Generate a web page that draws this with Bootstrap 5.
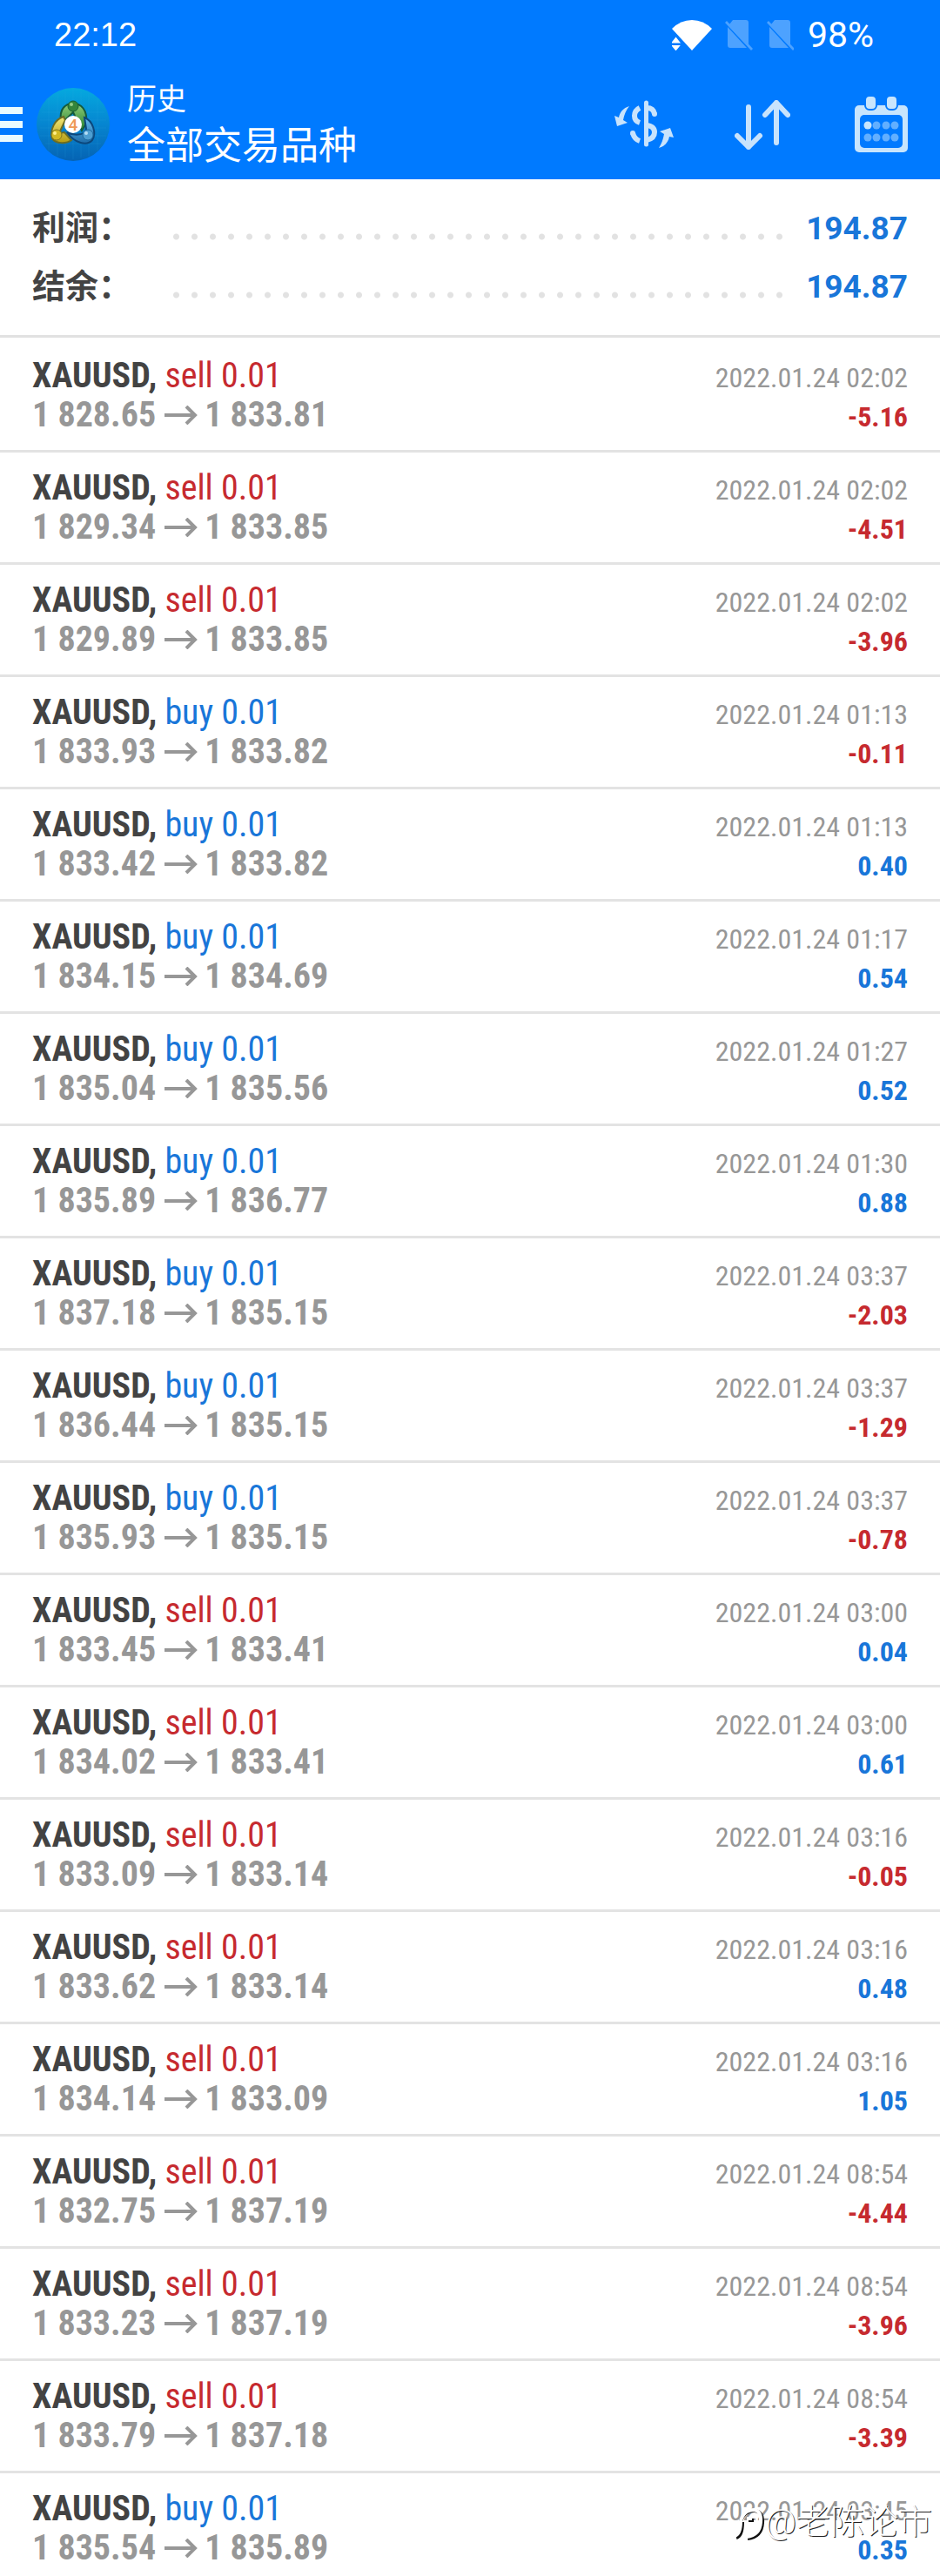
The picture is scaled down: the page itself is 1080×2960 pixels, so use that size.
<!DOCTYPE html>
<html lang="zh-CN">
<head>
<meta charset="utf-8">
<meta name="viewport" content="width=device-width, initial-scale=1">
<title>历史</title>
<link rel="stylesheet" href="https://cdn.jsdelivr.net/npm/bootstrap@5.3.0/dist/css/bootstrap.min.css">
<style>
body{font-family:Roboto,"Noto Sans CJK SC",sans-serif;background:#fff;color:#434343}
.app-head{background:#007aff;color:#fff}
.status-bar{height:80px;padding:0 76px 0 62px;font:38px/80px "Liberation Sans",sans-serif}
.status-bar .pct{font-family:Roboto,sans-serif;font-size:41px}
.tool-row{height:126px;padding-right:36px}
.tool-row button{background:none;border:0;padding:0;display:block}
.logo{margin-left:16px;margin-right:20px}
.sort-btn{margin-left:70px}
.cal-btn{margin-left:74px}
.t-small{font-size:34px;line-height:50px}
.t-big{font-size:44px;line-height:58px}
.totals{padding:23px 37px 22px;border-bottom:3px solid #e1e1e1}
.total-line{font-size:38px;line-height:67px;font-weight:700}
.total-line dd{font-size:37px;color:#1976d9}
.dots{height:8px;margin:18px 20px 0 41px;background:radial-gradient(circle at 50% 50%,#e2e2e2 3px,transparent 4px) 0 0/21px 8px round}
.deals{padding-top:3px}
.deal{padding:18px 37px;border-bottom:3px solid #e3e3e3;font-family:"Roboto Condensed","Liberation Sans Narrow",Roboto,sans-serif;font-size:40px;line-height:45px}
.deal:last-child{border:0;padding-bottom:10px}
.deal .when{font-size:32px;line-height:36px;color:#979797}
.deal .gain{font-size:32px;line-height:36px;font-weight:700}
.prices{color:#979797;font-weight:700}
.sell,.loss{color:#c62a2f}
.buy,.win{color:#1976d9}
.stamp{right:9px;bottom:38px;color:#fff;font-size:39px;font-weight:300;line-height:48px;text-shadow:1px 1px 0 #222}
</style>
<script src="https://cdn.jsdelivr.net/npm/bootstrap@5.3.0/dist/js/bootstrap.bundle.min.js"></script>
</head>
<body class="position-relative">
<header class="app-head">
  <div class="status-bar d-flex align-items-center justify-content-between">
    <span>22:12</span>
    <div class="d-flex align-items-center">
      <svg width="140" height="36" viewBox="0 0 140 36" aria-hidden="true">
        <path fill="#fff" d="M0 11Q10 1 23 1T46 11L23 36ZM"/>
        <path fill="#fff" stroke="#007aff" stroke-width="2" d="M-3 28.500 4.500 19 12 28.500ZM-3 29 4.500 38 12 29Z"/>
        <g fill="#4da2ff"><path id="sim" d="M70 1h15q3 0 3 3v25L66 6ZM64 9 86 33H67q-3 0-3-3ZM61 4l2-2 30 32-2 2Z"/><use href="#sim" x="48"/></g>
      </svg>
      <span class="pct ms-3">98%</span>
    </div>
  </div>
  <div class="tool-row d-flex align-items-center">
    <button type="button" aria-label="菜单"><svg class="d-block" width="26" height="40" fill="#e9fbff"><path d="M0 0h26v8H0zM0 16h26v8H0zM0 32h26v8H0z"/></svg></button>
    <svg class="logo" width="84" height="84" viewBox="0 0 84 84" aria-hidden="true">
      <defs>
        <linearGradient id="sky" x2="0" y2="1"><stop stop-color="#05a9df"/><stop offset=".5" stop-color="#0685d0"/><stop offset="1" stop-color="#0563b3"/></linearGradient>
        <linearGradient id="gr" x2="0" y2="1"><stop stop-color="#8fcc78"/><stop offset="1" stop-color="#24812d"/></linearGradient>
        <linearGradient id="ye" x2="0" y2="1"><stop stop-color="#f2e878"/><stop offset="1" stop-color="#b59b12"/></linearGradient>
        <linearGradient id="bl" x2="0" y2="1"><stop stop-color="#65b8e8"/><stop offset="1" stop-color="#1d6dab"/></linearGradient>
      </defs>
      <circle cx="42" cy="42" r="42" fill="url(#sky)"/>
      <path stroke="#39b8e8" stroke-opacity=".15" d="M14 12v60M24 6v72M33 4v76M42 2v80M51 4v76M60 6v72M70 12v60M6 28h72M4 37h76M4 46h76M4 55h76M10 64h64" fill="none"/>
      <path d="M28 38C26 24 33 18 42 18s17 7 15 23l-5 8L42 28l-8 8Z" fill="url(#gr)" stroke="#155a3c" stroke-width="2"/>
      <path d="M31 33c-10 3-16 15-13 25 4 7 17 6 22 2l-8-9-6 1 7-15Z" fill="url(#ye)" stroke="#6b6d24" stroke-width="2"/>
      <path d="M55 34c10 4 14 18 9 26-6 7-20 4-29-9 8 4 14 4 21 0l1-4Z" fill="url(#bl)" stroke="#0c477c" stroke-width="2"/>
      <circle cx="42" cy="21" r="6" fill="#35853a" stroke="#185e31"/><circle cx="40" cy="19" r="2" fill="#98ce86"/>
      <circle cx="23" cy="54" r="6" fill="#d1b923" stroke="#81761f"/><circle cx="21" cy="52" r="2" fill="#fff18c"/>
      <circle cx="59" cy="54" r="6" fill="#4e9ed1" stroke="#19679e"/><circle cx="57" cy="52" r="2" fill="#b5ddf5"/>
      <circle cx="42" cy="42" r="10" fill="#fff"/>
      <text x="42" y="49" text-anchor="middle" font-family="Roboto,sans-serif" font-size="19" font-weight="500" fill="#ef9a57">4</text>
    </svg>
    <div class="flex-grow-1"><div class="t-small">历史</div><h1 class="t-big fw-normal mb-0">全部交易品种</h1></div>
    <button type="button" aria-label="品种"><svg class="d-block" width="68" height="56" viewBox="0 0 68 56" fill="none" stroke="#c8e3fc" stroke-width="6">
      <path d="M36.500 3v48" stroke-width="5" stroke-linecap="round"/>
      <path d="M29 9Q23 12 23 18T29 26M37 9Q45 9 46 16M37 29Q46 30 46 37T37 46M21 38Q23 45 29 47"/>
      <path d="M46 16v.1M21 38v.1" stroke-linecap="round"/>
      <path d="M17 7C10 9 6 14 5 20L0 18 3 30 15 26 10 23C11 17 13 12 17 7ZM51 55c7-2 11-7 12-13l5 1-4-11-12 4 5 3c-1 6-3 11-6 16Z" fill="#c8e3fc" stroke="none"/></svg></button>
    <button type="button" class="sort-btn" aria-label="排序"><svg class="d-block" width="64" height="57" viewBox="0 0 64 57" fill="none" stroke="#c8e3fc" stroke-width="6" stroke-linecap="round" stroke-linejoin="round"><path d="M16 8v46M3 41l13 13 13-13M48 49V3M35 17 48 3 61 17"/></svg></button>
    <button type="button" class="cal-btn" aria-label="日期"><svg class="d-block" width="62" height="64" viewBox="0 0 62 64">
      <rect y="10" width="61" height="54" rx="5" fill="#c8e5fd"/><rect x="6" y="21" width="49" height="38" rx="5" fill="#007aff"/>
      <g fill="#c8e5fd" stroke="#007aff" stroke-width="2"><rect x="12" y="-1" width="13" height="16" rx="5"/><rect x="36" y="-1" width="13" height="16" rx="5"/></g>
      <g fill="#62afff"><circle cx="15" cy="33" r="4.500" fill="#c8e5fd"/><circle cx="25" cy="33" r="4.500"/><circle cx="36" cy="33" r="4.500"/><circle cx="46" cy="33" r="4.500"/><circle cx="15" cy="47" r="4.500"/><circle cx="25" cy="47" r="4.500"/><circle cx="36" cy="47" r="4.500"/><circle cx="46" cy="47" r="4.500"/></g></svg></button>
  </div>
</header>
<main>
  <dl class="totals mb-0">
    <div class="total-line d-flex align-items-center"><dt>利润：</dt><span class="dots flex-grow-1"></span><dd class="mb-0">194.87</dd></div>
    <div class="total-line d-flex align-items-center"><dt>结余：</dt><span class="dots flex-grow-1"></span><dd class="mb-0">194.87</dd></div>
  </dl>
  <ul class="deals list-unstyled mb-0" id="deals"></ul>
</main>
<div class="stamp position-absolute d-flex align-items-center">
  <svg width="36" height="44" viewBox="0 0 36 44" fill="none" aria-hidden="true"><path d="M3 40Q10 38 10 22M8 21q4-13 17-12 9 2 8 14-1 16-17 18M17 20h6" stroke="#111" stroke-width="4"/><path d="M1 38Q8 36 8 21q3-13 16-13 8 2 7 14-1 15-16 17M15 18h6" stroke="#fff" stroke-width="4"/></svg>
  <span>@老陈论市</span>
</div>
<script>
const deals = [
  ['sell','1 828.65','1 833.81','02:02','-5.16'],
  ['sell','1 829.34','1 833.85','02:02','-4.51'],
  ['sell','1 829.89','1 833.85','02:02','-3.96'],
  ['buy','1 833.93','1 833.82','01:13','-0.11'],
  ['buy','1 833.42','1 833.82','01:13','0.40'],
  ['buy','1 834.15','1 834.69','01:17','0.54'],
  ['buy','1 835.04','1 835.56','01:27','0.52'],
  ['buy','1 835.89','1 836.77','01:30','0.88'],
  ['buy','1 837.18','1 835.15','03:37','-2.03'],
  ['buy','1 836.44','1 835.15','03:37','-1.29'],
  ['buy','1 835.93','1 835.15','03:37','-0.78'],
  ['sell','1 833.45','1 833.41','03:00','0.04'],
  ['sell','1 834.02','1 833.41','03:00','0.61'],
  ['sell','1 833.09','1 833.14','03:16','-0.05'],
  ['sell','1 833.62','1 833.14','03:16','0.48'],
  ['sell','1 834.14','1 833.09','03:16','1.05'],
  ['sell','1 832.75','1 837.19','08:54','-4.44'],
  ['sell','1 833.23','1 837.19','08:54','-3.96'],
  ['sell','1 833.79','1 837.18','08:54','-3.39'],
  ['buy','1 835.54','1 835.89','03:45','0.35']
];
const arrow = '<svg class="mx-2" width="40" height="22" viewBox="0 0 40 22" fill="none" stroke="#979797" stroke-width="4" role="img" aria-label="→"><path d="M2 11h35M27 1l10 10-10 10"/></svg>';
document.getElementById('deals').innerHTML = deals.map(([side, from, to, time, gain]) => `
  <li class="deal">
    <div class="d-flex justify-content-between align-items-baseline"><div><b>XAUUSD,</b> <span class="${side}">${side} 0.01</span></div><time class="when">2022.01.24 ${time}</time></div>
    <div class="d-flex justify-content-between align-items-baseline"><div class="prices d-flex align-items-center">${from}${arrow}${to}</div><span class="gain ${gain[0] === '-' ? 'loss' : 'win'}">${gain}</span></div>
  </li>`).join('');
</script>
</body>
</html>
